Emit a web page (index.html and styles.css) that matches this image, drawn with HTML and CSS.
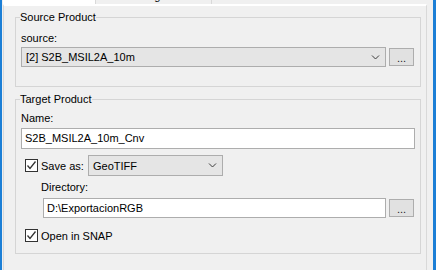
FILE: index.html
```html
<!DOCTYPE html>
<html lang="en">
<head>
    <meta charset="UTF-8">
    <title>Write Product</title>
    <link rel="stylesheet" href="styles.css">
</head>
<body>
    <div class="window">
        <div class="tabs">
            <div class="tab tab-active"><span class="tab-label">I/O Parameters</span></div>
            <div class="tab"><span class="tab-label">Processing Parameters</span></div>
        </div>

        <div class="panel">
            <fieldset class="group group-source">
                <legend>Source Product</legend>
                <div class="field-label">source:</div>
                <div class="row row-browse">
                    <div class="combo combo-source">
                        <span>[2] S2B_MSIL2A_10m</span>
                        <svg class="chevron" viewBox="0 0 8 5"><polyline points="0.5,0.5 4,4 7.5,0.5"/></svg>
                    </div>
                    <button class="dots">...</button>
                </div>
            </fieldset>

            <fieldset class="group group-target">
                <legend>Target Product</legend>
                <div class="field-label">Name:</div>
                <div class="text-input input-name">S2B_MSIL2A_10m_Cnv</div>

                <div class="row row-save">
                    <span class="check">
                        <svg viewBox="0 0 11 11"><polyline points="1.5,5.5 4,8.5 9.5,1.5"/></svg>
                    </span>
                    <span class="check-label save-label">Save as:</span>
                    <div class="combo combo-format">
                        <span>GeoTIFF</span>
                        <svg class="chevron" viewBox="0 0 8 5"><polyline points="0.5,0.5 4,4 7.5,0.5"/></svg>
                    </div>
                </div>

                <div class="field-label dir-label">Directory:</div>
                <div class="row row-browse row-dir">
                    <div class="text-input input-dir">D:\ExportacionRGB</div>
                    <button class="dots">...</button>
                </div>

                <div class="row row-open">
                    <span class="check">
                        <svg viewBox="0 0 11 11"><polyline points="1.5,5.5 4,8.5 9.5,1.5"/></svg>
                    </span>
                    <span class="check-label">Open in SNAP</span>
                </div>
            </fieldset>
        </div>
    </div>
</body>
</html>
```

FILE: styles.css
```css
* {
    margin: 0;
    padding: 0;
    box-sizing: border-box;
}

body {
    width: 436px;
    height: 270px;
    overflow: hidden;
    background: #f0f0f0;
    font-family: "Liberation Sans", Arial, sans-serif;
    font-size: 11px;
    color: #000;
}

.window {
    height: 270px;
    display: flex;
    flex-direction: column;
    border-left: 2px solid #1c7fd6;
    border-right: 3px solid #1c7fd6;
    padding: 0 6px 0 1px;
}

/* tab strip, cut off at the top of the shot */
.tabs {
    display: flex;
    height: 4px;
    overflow: hidden;
}

.tab {
    height: 4px;
    overflow: hidden;
    line-height: 14px;
    white-space: nowrap;
}

.tab-label {
    display: block;
    margin-top: -11px;
}

.tab-active {
    width: 92px;
    background: #fff;
    color: #fff;
}

.tab:not(.tab-active) {
    width: 117px;
    background: #f0f0f0;
    border-left: 1px solid #d9d9d9;
    border-right: 1px solid #d9d9d9;
    padding-left: 10px;
}

.panel {
    flex: 1;
    border-top: 2px solid #fff;
    border-left: 1px solid #d9d9d9;
    border-right: 1px solid #d9d9d9;
    padding: 4px 5px 0 11px;
}

.group {
    border: 1px solid #d5d5d5;
    padding: 0 5px 19px 5px;
    min-width: 0;
}

.group legend {
    line-height: 14px;
    padding: 0;
    margin-left: -1px;
}

.group-target {
    margin-top: 5px;
    padding-bottom: 10px;
}

.field-label {
    line-height: 14px;
    margin-top: 7px;
}

.group-target .field-label {
    margin-top: 5px;
}

.group-target .dir-label {
    margin-top: 4px;
    padding-left: 20px;
}

.row {
    display: flex;
    align-items: center;
}

.row-browse {
    gap: 3px;
    padding-right: 1px;
    margin-top: 2px;
}

.combo {
    height: 20px;
    display: flex;
    align-items: center;
    justify-content: space-between;
    border: 1px solid #adadad;
    background: #e5e5e5;
    padding: 0 5px 0 4px;
}

.combo-source {
    flex: 1;
}

.chevron {
    width: 9px;
    height: 5px;
    fill: none;
    stroke: #3c3c3c;
    stroke-width: 1;
}

.dots {
    width: 25px;
    height: 18px;
    border: 1px solid #adadad;
    background: #e1e1e1;
    font-family: inherit;
    font-size: 11px;
    color: #222;
    line-height: 14px;
    padding-top: 1px;
}

.text-input {
    height: 21px;
    border: 1px solid #adadad;
    background: #fff;
    line-height: 19px;
    padding-left: 3px;
}

.input-name {
    margin-top: 3px;
}

.row-save {
    margin-top: 6px;
    height: 21px;
}

.check {
    width: 13px;
    height: 13px;
    margin-left: 4px;
    border: 1px solid #333;
    background: #fff;
    display: flex;
}

.check svg {
    width: 11px;
    height: 11px;
    fill: none;
    stroke: #333;
    stroke-width: 1.3;
}

.check-label {
    margin-left: 3px;
    line-height: 14px;
}

.save-label {
    width: 47px;
}

.combo-format {
    width: 135px;
    height: 21px;
}

.row-dir {
    margin-top: 4px;
    padding-left: 22px;
}

.input-dir {
    flex: 1;
    height: 20px;
    line-height: 18px;
}

.row-open {
    margin-top: 10px;
    height: 15px;
}
```
